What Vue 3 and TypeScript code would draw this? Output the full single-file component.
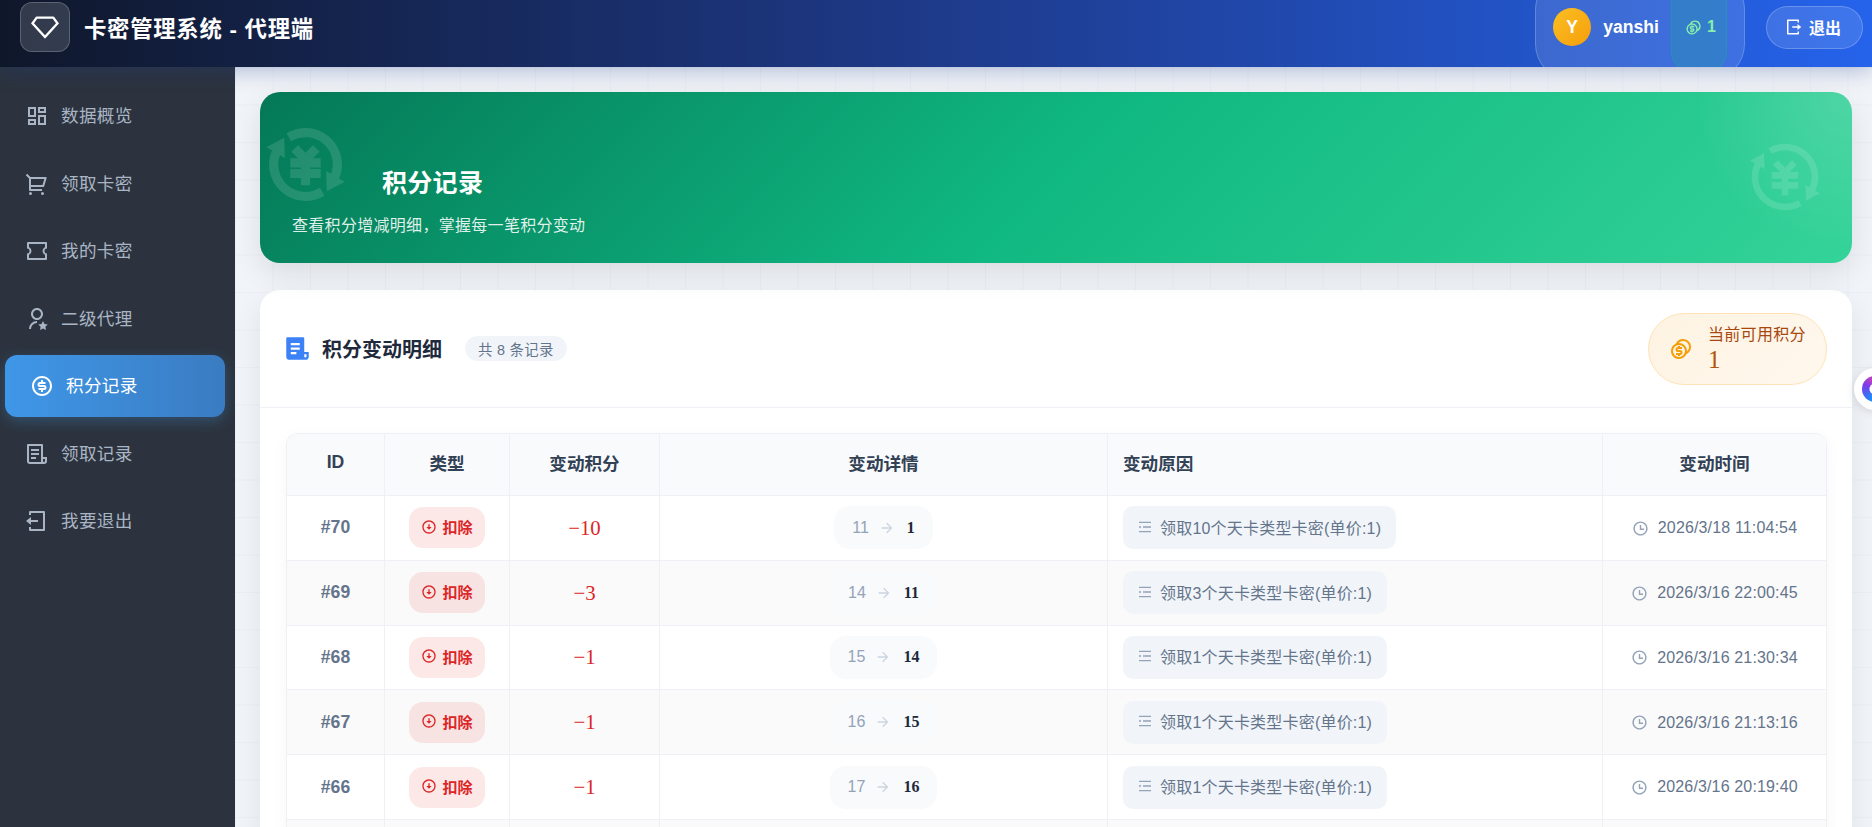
<script setup lang="ts">
const icons: Record<string, string> = {
  dashboard: 'M13 21V11H21V21H13ZM3 13V3H11V13H3ZM9 11V5H5V11H9ZM3 21V15H11V21H3ZM5 19H9V17H5V19ZM15 19H19V13H15V19ZM13 3H21V9H13V3ZM15 5V7H19V5H15Z',
  cart: 'M4 6.41L.76 3.17 2.18 1.76 5.42 5H20.66a1 1 0 0 1 .96 1.29l-2.4 8a1 1 0 0 1-.96.71H6v2H17v2H5a1 1 0 0 1-1-1V6.41zM6 7v6h11.51l1.8-6H6zM5.5 23a1.5 1.5 0 1 1 0-3 1.5 1.5 0 0 1 0 3zm12 0a1.5 1.5 0 1 1 0-3 1.5 1.5 0 0 1 0 3z',
  coupon: 'M2.005 9.5V4a1 1 0 0 1 1-1h18a1 1 0 0 1 1 1v5.5a2.5 2.5 0 1 0 0 5V20a1 1 0 0 1-1 1h-18a1 1 0 0 1-1-1v-5.5a2.5 2.5 0 1 0 0-5zm2-1.532A4.5 4.5 0 0 1 6.505 12a4.5 4.5 0 0 1-2.5 4.032V19h16v-2.968A4.5 4.5 0 0 1 17.505 12a4.5 4.5 0 0 1 2.5-4.032V5h-16v2.968z',
  userStar: 'M12 14v2a6 6 0 0 0-6 6H4a8 8 0 0 1 8-8zm0-1c-3.315 0-6-2.685-6-6s2.685-6 6-6 6 2.685 6 6-2.685 6-6 6zm0-2c2.21 0 4-1.79 4-4s-1.79-4-4-4-4 1.79-4 4 1.79 4 4 4zm6 10.5l-2.939 1.545.561-3.272-2.377-2.318 3.286-.478L18 14l1.47 2.977 3.285.478-2.377 2.318.56 3.272L18 21.5z',
  dollar: 'M12 22C6.477 22 2 17.523 2 12S6.477 2 12 2s10 4.477 10 10-4.477 10-10 10zm0-2a8 8 0 1 0 0-16 8 8 0 0 0 0 16zm-3.5-6H14a.5.5 0 1 0 0-1h-4a2.5 2.5 0 1 1 0-5h1V6h2v2h2.5v2H10a.5.5 0 1 0 0 1h4a2.5 2.5 0 1 1 0 5h-1v2h-2v-2H8.5v-2z',
  fileList: 'M19 22H5a3 3 0 0 1-3-3V3a1 1 0 0 1 1-1h14a1 1 0 0 1 1 1v12h4v4a3 3 0 0 1-3 3zm-1-5v2a1 1 0 0 0 2 0v-2h-2zm-2 3V4H4v15a1 1 0 0 0 1 1h11zM6 7h8v2H6V7zm0 4h8v2H6v-2zm0 4h5v2H6v-2z',
  fileListFill: 'M19 22H5a3 3 0 0 1-3-3V3a1 1 0 0 1 1-1h14a1 1 0 0 1 1 1v12h4v4a3 3 0 0 1-3 3zm-1-5v2a1 1 0 0 0 2 0v-2h-2zM6 7v2h8V7H6zm0 4v2h8v-2H6zm0 4v2h5v-2H6z',
  logoutLeft: 'M4 18h2v2h12V4H6v2H4V3a1 1 0 0 1 1-1h14a1 1 0 0 1 1 1v18a1 1 0 0 1-1 1H5a1 1 0 0 1-1-1v-3zm2-7h7v2H6v3l-5-4 5-4v3z',
  logoutRight: 'M5 22a1 1 0 0 1-1-1V3a1 1 0 0 1 1-1h14a1 1 0 0 1 1 1v3h-2V4H6v16h12v-2h2v3a1 1 0 0 1-1 1H5zm13-6v-3h-7v-2h7V8l5 4-5 4z',
  exchange: 'M19.375 15.103A8.001 8.001 0 0 0 8.03 5.053l-.992-1.737A9.996 9.996 0 0 1 17 3.34c4.49 2.592 6.21 8.142 4.117 12.77l1.342.774-4.165 2.214-.165-4.714 1.246.719zM4.625 8.897a8.001 8.001 0 0 0 11.345 10.05l.992 1.737A9.996 9.996 0 0 1 7 20.66C2.51 18.068.79 12.518 2.883 7.89L1.54 7.117l4.165-2.214.165 4.714-1.246-.719zM13 13.536h3v2h-3v2h-2v-2H8v-2h3v-1H8v-2h2.586L8.464 8.414 9.88 7 12 9.121 14.121 7l1.415 1.414-2.122 2.122H16v2h-3v1z',
  coins: 'M14 2a8 8 0 0 1 3.292 15.293A8 8 0 1 1 6.706 6.707 8.003 8.003 0 0 1 14 2zm-4 6a6 6 0 1 0 0 12 6 6 0 0 0 0-12zm1 1v1h2v2H9a.5.5 0 0 0-.09.992L9 13h2a2.5 2.5 0 1 1 0 5v1H9v-1H7v-2h4a.5.5 0 0 0 .09-.992L11 15H9a2.5 2.5 0 1 1 0-5V9h2zm3-5a5.985 5.985 0 0 0-4.484 2.013 8 8 0 0 1 8.47 8.471A6 6 0 0 0 14 4z',
  arrowDown: 'M12 2c5.52 0 10 4.48 10 10s-4.48 10-10 10S2 17.52 2 12 6.48 2 12 2zm0 18c4.42 0 8-3.58 8-8s-3.58-8-8-8-8 3.58-8 8 3.58 8 8 8zm1-8h3l-4 4-4-4h3V8h2v4z',
  time: 'M12 22C6.477 22 2 17.523 2 12S6.477 2 12 2s10 4.477 10 10-4.477 10-10 10zm0-2a8 8 0 1 0 0-16 8 8 0 0 0 0 16zm1-8h4v2h-6V7h2v5z',
  arrowRight: 'M16.172 11l-5.364-5.364 1.414-1.414L20 12l-7.778 7.778-1.414-1.414L16.172 13H4v-2h12.172z',
  indent: 'M3 4h18v2H3V4zM3 11h3v2H3v-2zM9 11h12v2H9v-2zM3 18h18v2H3v-2z',
  diamond: 'M4.873 3h14.254a1 1 0 0 1 .809.412l3.823 5.256a.5.5 0 0 1-.037.633L12.367 21.602a.5.5 0 0 1-.734 0L.278 9.302a.5.5 0 0 1-.037-.634l3.823-5.256A1 1 0 0 1 4.873 3zm.51 2l-2.8 3.85L12 19.05 21.417 8.85 18.617 5H5.383z',
}

const menu = [
  { label: '数据概览', icon: 'dashboard' },
  { label: '领取卡密', icon: 'cart' },
  { label: '我的卡密', icon: 'coupon' },
  { label: '二级代理', icon: 'userStar' },
  { label: '积分记录', icon: 'dollar', active: true },
  { label: '领取记录', icon: 'fileList' },
  { label: '我要退出', icon: 'logoutLeft' },
]

const records = [
  { id: 70, change: 10, before: 11, after: 1, reason: '领取10个天卡类型卡密(单价:1)', time: '2026/3/18 11:04:54' },
  { id: 69, change: 3, before: 14, after: 11, reason: '领取3个天卡类型卡密(单价:1)', time: '2026/3/16 22:00:45' },
  { id: 68, change: 1, before: 15, after: 14, reason: '领取1个天卡类型卡密(单价:1)', time: '2026/3/16 21:30:34' },
  { id: 67, change: 1, before: 16, after: 15, reason: '领取1个天卡类型卡密(单价:1)', time: '2026/3/16 21:13:16' },
  { id: 66, change: 1, before: 17, after: 16, reason: '领取1个天卡类型卡密(单价:1)', time: '2026/3/16 20:19:40' },
]
</script>

<template>
  <div class="app">
    <header class="topbar">
      <div class="logo">
        <svg class="logo-icon" viewBox="0 0 24 24"><path :d="icons.diamond" /></svg>
      </div>
      <h1 class="brand">卡密管理系统 - 代理端</h1>
      <div class="user-pill">
        <span class="avatar">Y</span>
        <span class="username">yanshi</span>
        <span class="user-points">
          <svg viewBox="0 0 24 24"><path :d="icons.coins" /></svg>
          1
        </span>
      </div>
      <button class="logout">
        <svg viewBox="0 0 24 24"><path :d="icons.logoutRight" /></svg>
        退出
      </button>
    </header>

    <div class="body">
      <nav class="sidebar">
        <a v-for="item in menu" :key="item.label" class="nav-item" :class="{ active: item.active }">
          <svg viewBox="0 0 24 24"><path :d="icons[item.icon]" /></svg>
          <span>{{ item.label }}</span>
        </a>
      </nav>

      <main class="content">
        <section class="hero">
          <svg class="hero-deco left" viewBox="0 0 24 24"><path :d="icons.exchange" /></svg>
          <svg class="hero-deco right" viewBox="0 0 24 24"><path :d="icons.exchange" /></svg>
          <h2 class="hero-title">积分记录</h2>
          <p class="hero-sub">查看积分增减明细，掌握每一笔积分变动</p>
        </section>

        <section class="card">
          <div class="card-head">
            <svg class="head-icon" viewBox="0 0 24 24"><path :d="icons.fileListFill" /></svg>
            <h3 class="card-title">积分变动明细</h3>
            <span class="count">共 8 条记录</span>
            <div class="balance">
              <svg viewBox="0 0 24 24"><path :d="icons.coins" /></svg>
              <div class="balance-text">
                <span class="balance-label">当前可用积分</span>
                <span class="balance-value">1</span>
              </div>
            </div>
          </div>

          <div class="table-wrap">
            <table class="table">
              <colgroup>
                <col style="width: 98px" />
                <col style="width: 125px" />
                <col style="width: 150px" />
                <col style="width: 448px" />
                <col style="width: 495px" />
                <col style="width: 224px" />
              </colgroup>
              <thead>
                <tr>
                  <th>ID</th>
                  <th>类型</th>
                  <th>变动积分</th>
                  <th>变动详情</th>
                  <th class="left">变动原因</th>
                  <th>变动时间</th>
                </tr>
              </thead>
              <tbody>
                <tr v-for="r in records" :key="r.id">
                  <td class="id">#{{ r.id }}</td>
                  <td>
                    <span class="type">
                      <svg viewBox="0 0 24 24"><path :d="icons.arrowDown" /></svg>
                      扣除
                    </span>
                  </td>
                  <td class="amount">−{{ r.change }}</td>
                  <td>
                    <span class="detail">
                      <span class="before">{{ r.before }}</span>
                      <svg viewBox="0 0 24 24"><path :d="icons.arrowRight" /></svg>
                      <span class="after">{{ r.after }}</span>
                    </span>
                  </td>
                  <td class="left">
                    <span class="reason">
                      <svg viewBox="0 0 24 24"><path :d="icons.indent" /></svg>
                      {{ r.reason }}
                    </span>
                  </td>
                  <td>
                    <span class="time">
                      <svg viewBox="0 0 24 24"><path :d="icons.time" /></svg>
                      {{ r.time }}
                    </span>
                  </td>
                </tr>
                <tr class="filler">
                  <td v-for="n in 6" :key="n"></td>
                </tr>
              </tbody>
            </table>
          </div>
        </section>
      </main>
    </div>

    <div class="float-btn"><span class="float-ring"></span></div>
  </div>
</template>

<style>
html,
body {
  margin: 0;
  height: 100%;
  overflow: hidden;
}
</style>

<style scoped>
.app {
  position: relative;
  height: 100vh;
  display: flex;
  flex-direction: column;
  overflow: hidden;
  font-family: 'Liberation Sans', 'Noto Sans CJK SC', sans-serif;
  letter-spacing: 0.3px;
}
svg {
  fill: currentColor;
  flex-shrink: 0;
}

.topbar {
  position: relative;
  z-index: 2;
  flex: 0 0 67px;
  box-sizing: border-box;
  display: flex;
  align-items: center;
  padding: 0 9px 13px 20px;
  overflow: hidden;
  background: linear-gradient(90deg, #0f172a 0%, #1e3a8a 50%, #2563eb 100%);
  box-shadow: 0 4px 20px rgba(30, 58, 138, 0.3);
  color: #fff;
}
.logo {
  width: 50px;
  height: 50px;
  box-sizing: border-box;
  display: flex;
  align-items: center;
  justify-content: center;
  border-radius: 12px;
  background: rgba(255, 255, 255, 0.15);
  border: 1px solid rgba(255, 255, 255, 0.2);
}
.logo-icon {
  width: 28px;
  height: 28px;
}
.brand {
  margin: 0 0 0 14px;
  font-size: 22.4px;
  font-weight: 700;
  letter-spacing: 0.7px;
}
.user-pill {
  margin-left: auto;
  height: 106px;
  flex-shrink: 0;
  box-sizing: border-box;
  display: flex;
  align-items: center;
  padding: 0 17px;
  border-radius: 36px;
  background: rgba(255, 255, 255, 0.12);
  border: 1px solid rgba(255, 255, 255, 0.2);
}
.avatar {
  width: 38px;
  height: 38px;
  display: flex;
  align-items: center;
  justify-content: center;
  border-radius: 50%;
  background: linear-gradient(135deg, #fbbf24, #f59e0b);
  font-size: 17.6px;
  font-weight: 700;
}
.username {
  margin-left: 12px;
  font-size: 17.6px;
  font-weight: 700;
  letter-spacing: 0;
}
.user-points {
  margin-left: 12px;
  height: 90px;
  width: 56px;
  box-sizing: border-box;
  display: flex;
  align-items: center;
  gap: 5px;
  padding-left: 13px;
  border-radius: 20px;
  background: rgba(16, 185, 129, 0.2);
  border: 1px solid rgba(16, 185, 129, 0.3);
  color: #86efac;
  font-size: 16px;
  font-weight: 700;
}
.user-points svg {
  width: 17px;
  height: 17px;
}
.logout {
  margin-left: 21px;
  height: 43px;
  width: 97px;
  box-sizing: border-box;
  display: flex;
  align-items: center;
  gap: 7px;
  padding: 0 0 0 17px;
  border-radius: 22px;
  background: rgba(255, 255, 255, 0.12);
  border: 1px solid rgba(255, 255, 255, 0.22);
  color: #fff;
  font: inherit;
  font-size: 16px;
  font-weight: 700;
}
.logout svg {
  width: 18px;
  height: 18px;
}

.body {
  flex: 1;
  min-height: 0;
  display: flex;
}
.sidebar {
  flex: 0 0 235px;
  box-sizing: border-box;
  display: flex;
  flex-direction: column;
  gap: 5.5px;
  padding-top: 18px;
  background: #2c333e;
  color: #a9b5c4;
}
.nav-item {
  width: 220px;
  height: 62px;
  box-sizing: border-box;
  display: flex;
  align-items: center;
  gap: 12px;
  padding-left: 25px;
  border-radius: 12px;
  font-size: 17.6px;
}
.nav-item svg {
  width: 24px;
  height: 24px;
}
.nav-item span {
  margin-bottom: 3px;
}
.nav-item.active {
  margin-left: 5px;
  background: linear-gradient(90deg, #3f97e8, #3a7cc2);
  box-shadow: 0 4px 14px rgba(66, 153, 225, 0.3);
  color: #fff;
}

.content {
  flex: 1;
  min-width: 0;
  box-sizing: border-box;
  padding: 25px 20px 0 25px;
  background-color: #f1f4f8;
  background-image:
    linear-gradient(rgba(59, 91, 180, 0.035) 1px, transparent 1px),
    linear-gradient(90deg, rgba(59, 91, 180, 0.035) 1px, transparent 1px);
  background-size: 37.5px 37.5px;
}
.hero {
  position: relative;
  height: 171px;
  box-sizing: border-box;
  padding: 76px 32px 0;
  overflow: hidden;
  border-radius: 20px;
  background:
    radial-gradient(circle at 100% 0%, rgba(255, 255, 255, 0.16), transparent 160px),
    linear-gradient(135deg, #047857 0%, #10b981 50%, #34d399 100%);
  box-shadow: 0 10px 30px rgba(0, 0, 0, 0.1);
  color: #fff;
}
.hero-deco {
  position: absolute;
  color: #fff;
}
.hero-deco.left {
  left: 3px;
  top: 30px;
  width: 85px;
  height: 85px;
  opacity: 0.12;
  stroke: #fff;
  stroke-width: 0.6;
}
.hero-deco.right {
  right: 27px;
  top: 45px;
  width: 80px;
  height: 80px;
  opacity: 0.13;
}
.hero-title {
  margin: 0;
  padding-left: 90px;
  font-size: 25px;
  line-height: 30px;
  font-weight: 700;
}
.hero-sub {
  margin: 16px 0 0;
  font-size: 16px;
  line-height: 24px;
  color: rgba(255, 255, 255, 0.88);
}

.card {
  margin-top: 27px;
  background: #fff;
  border-radius: 20px 20px 0 0;
  box-shadow: 0 10px 30px rgba(0, 0, 0, 0.08);
  padding-bottom: 20px;
}
.card-head {
  height: 118px;
  box-sizing: border-box;
  display: flex;
  align-items: center;
  padding: 0 25px 0 24px;
  border-bottom: 1px solid #eef1f5;
}
.head-icon {
  width: 27px;
  height: 27px;
  color: #3b82f6;
}
.card-title {
  margin: 0 0 0 11px;
  font-size: 20px;
  font-weight: 700;
  color: #1e293b;
  letter-spacing: 0;
}
.count {
  margin-left: 23px;
  height: 25px;
  box-sizing: border-box;
  display: flex;
  align-items: center;
  padding: 0 13px;
  border-radius: 13px;
  background: #f1f5f9;
  color: #64748b;
  font-size: 14.4px;
}
.balance {
  margin-left: auto;
  width: 179px;
  height: 72px;
  box-sizing: border-box;
  display: flex;
  align-items: center;
  gap: 15px;
  padding-left: 20px;
  border-radius: 36px;
  border: 1px solid #fde3b5;
  background: linear-gradient(135deg, #fef3e2, #fff8ee);
}
.balance svg {
  width: 24px;
  height: 24px;
  color: #f59e0b;
}
.balance-text {
  display: flex;
  flex-direction: column;
  color: #b45309;
}
.balance-label {
  font-size: 16px;
  line-height: 22px;
  color: #a8480f;
}
.balance-value {
  font-family: 'Liberation Serif', serif;
  font-size: 25px;
  line-height: 28px;
}

.table-wrap {
  margin: 25px 25px 0 26px;
  border-top: 1px solid #edf0f5;
  border-left: 1px solid #edf0f5;
  border-radius: 12px 12px 0 0;
  overflow: hidden;
  box-shadow: 0 4px 16px rgba(15, 23, 42, 0.04);
}
.table {
  width: 1540px;
  table-layout: fixed;
  border-collapse: separate;
  border-spacing: 0;
}
th,
td {
  padding: 0;
  text-align: center;
  border-right: 1px solid #edf0f5;
  border-bottom: 1px solid #edf0f5;
}
th {
  height: 62px;
  padding-bottom: 4px;
  box-sizing: border-box;
  background: #f8fafc;
  color: #334155;
  font-size: 17.6px;
  font-weight: 700;
  letter-spacing: 0;
}
td {
  height: 63.8px;
}
tbody tr:nth-child(even) td {
  background: #fafafa;
}
th.left,
td.left {
  text-align: left;
  padding-left: 15px;
}
.id {
  color: #64748b;
  font-size: 17.6px;
  font-weight: 700;
  letter-spacing: 0;
}
.type {
  display: inline-flex;
  align-items: center;
  gap: 5px;
  height: 41px;
  box-sizing: border-box;
  padding: 0 12px 2px;
  vertical-align: middle;
  border-radius: 14px;
  background: rgba(239, 68, 68, 0.12);
  color: #dc2626;
  font-size: 15px;
  font-weight: 700;
  letter-spacing: 0;
}
.type svg {
  width: 16px;
  height: 16px;
}
.amount {
  font-family: 'Liberation Serif', serif;
  font-size: 20.8px;
  color: #dc2626;
  letter-spacing: 0;
}
.detail {
  display: inline-flex;
  align-items: center;
  gap: 10px;
  height: 43px;
  padding: 0 18px;
  vertical-align: middle;
  border-radius: 16px;
  background: #f8fafc;
}
.detail svg {
  width: 16px;
  height: 16px;
  color: #cbd5e1;
}
.before {
  color: #94a3b8;
  font-size: 16px;
  letter-spacing: 0;
}
.after {
  margin-left: 2px;
  font-family: 'Liberation Serif', serif;
  font-size: 16px;
  font-weight: 700;
  color: #1e293b;
  letter-spacing: 0;
}
.reason {
  display: inline-flex;
  align-items: center;
  gap: 7px;
  height: 43px;
  box-sizing: border-box;
  padding: 0 15px 2px 14px;
  vertical-align: middle;
  border-radius: 10px;
  background: #f1f5f9;
  color: #64748b;
  font-size: 16px;
  letter-spacing: 0.2px;
}
.reason svg {
  width: 16px;
  height: 16px;
  color: #94a3b8;
}
.time {
  display: inline-flex;
  align-items: center;
  gap: 9px;
  color: #64748b;
  font-size: 16px;
  letter-spacing: 0.15px;
  vertical-align: middle;
}
.time svg {
  width: 17px;
  height: 17px;
  color: #94a3b8;
}

.float-btn {
  position: absolute;
  left: 1854px;
  top: 368px;
  z-index: 3;
  width: 42px;
  height: 42px;
  display: flex;
  align-items: center;
  justify-content: center;
  border-radius: 50%;
  background: #fff;
  box-shadow: 0 2px 10px rgba(0, 0, 0, 0.12);
}
.float-ring {
  width: 26px;
  height: 26px;
  box-sizing: border-box;
  border-radius: 50%;
  background:
    radial-gradient(circle, #fff 0 5px, transparent 6px),
    conic-gradient(from 200deg, #1d8cf8, #7c3aed, #ec4899, #7c3aed, #1d8cf8);
}
</style>
